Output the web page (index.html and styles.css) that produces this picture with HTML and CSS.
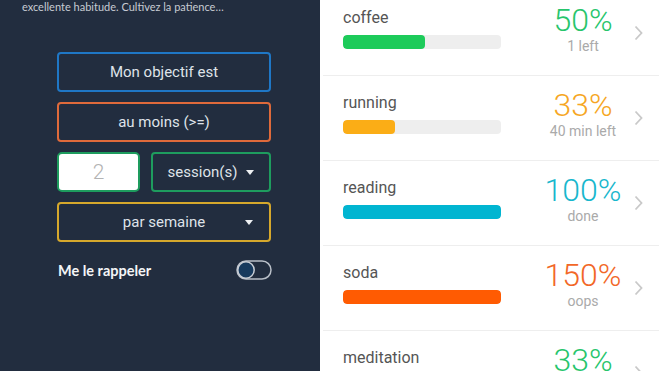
FILE: index.html
```html
<!DOCTYPE html>
<html lang="fr">
<head>
    <meta charset="UTF-8">
    <meta name="viewport" content="width=device-width, initial-scale=1.0">
    <title>Habitudes</title>
    <link rel="stylesheet" href="styles.css">
</head>
<body>
    <div class="screen">
        <div class="setup-panel">
            <p class="intro">excellente habitude. Cultivez la patience…</p>

            <div class="goal-form">
                <div class="goal-box box-blue">Mon objectif est</div>
                <div class="goal-box box-orange">au moins (&gt;=)</div>
                <div class="goal-row">
                    <div class="count-input">2</div>
                    <div class="goal-box box-green unit-select">
                        <span>session(s)</span>
                        <span class="caret"></span>
                    </div>
                </div>
                <div class="goal-box box-yellow period-select">
                    <span class="period-label">par semaine</span>
                    <span class="caret"></span>
                </div>

                <div class="reminder-row">
                    <span class="reminder-label">Me le rappeler</span>
                    <svg class="toggle" width="36" height="20" viewBox="0 0 36 20">
                        <rect x="1" y="1" width="34" height="18" rx="9" fill="none" stroke="#b9bfc8" stroke-width="1.5"/>
                        <circle cx="10" cy="10" r="8.2" fill="#173a5e" stroke="#c9ced6" stroke-width="1.5"/>
                    </svg>
                </div>
            </div>
        </div>

        <div class="habit-list">
            <div class="habit-row">
                <div class="habit-main">
                    <div class="habit-name">coffee</div>
                    <div class="bar"><div class="bar-fill fill-green" style="width: 52%"></div></div>
                </div>
                <div class="habit-stats">
                    <div class="percent text-green">50%</div>
                    <div class="status">1 left</div>
                </div>
                <svg class="chevron" width="9" height="16" viewBox="0 0 9 16"><path d="M1.5 1.5 L7.5 8 L1.5 14.5" fill="none" stroke="#c9c9c9" stroke-width="1.8"/></svg>
            </div>
            <div class="habit-row">
                <div class="habit-main">
                    <div class="habit-name">running</div>
                    <div class="bar"><div class="bar-fill fill-orange" style="width: 33%"></div></div>
                </div>
                <div class="habit-stats">
                    <div class="percent text-orange">33%</div>
                    <div class="status">40 min left</div>
                </div>
                <svg class="chevron" width="9" height="16" viewBox="0 0 9 16"><path d="M1.5 1.5 L7.5 8 L1.5 14.5" fill="none" stroke="#c9c9c9" stroke-width="1.8"/></svg>
            </div>
            <div class="habit-row">
                <div class="habit-main">
                    <div class="habit-name">reading</div>
                    <div class="bar"><div class="bar-fill fill-teal" style="width: 100%"></div></div>
                </div>
                <div class="habit-stats">
                    <div class="percent text-teal">100%</div>
                    <div class="status">done</div>
                </div>
                <svg class="chevron" width="9" height="16" viewBox="0 0 9 16"><path d="M1.5 1.5 L7.5 8 L1.5 14.5" fill="none" stroke="#c9c9c9" stroke-width="1.8"/></svg>
            </div>
            <div class="habit-row">
                <div class="habit-main">
                    <div class="habit-name">soda</div>
                    <div class="bar"><div class="bar-fill fill-red" style="width: 100%"></div></div>
                </div>
                <div class="habit-stats">
                    <div class="percent text-red">150%</div>
                    <div class="status">oops</div>
                </div>
                <svg class="chevron" width="9" height="16" viewBox="0 0 9 16"><path d="M1.5 1.5 L7.5 8 L1.5 14.5" fill="none" stroke="#c9c9c9" stroke-width="1.8"/></svg>
            </div>
            <div class="habit-row">
                <div class="habit-main">
                    <div class="habit-name">meditation</div>
                    <div class="bar"><div class="bar-fill fill-green" style="width: 33%"></div></div>
                </div>
                <div class="habit-stats">
                    <div class="percent text-green">33%</div>
                </div>
                <svg class="chevron" width="9" height="16" viewBox="0 0 9 16"><path d="M1.5 1.5 L7.5 8 L1.5 14.5" fill="none" stroke="#c9c9c9" stroke-width="1.8"/></svg>
            </div>
        </div>
    </div>
</body>
</html>
```

FILE: styles.css
```css
html, body {
    margin: 0;
    padding: 0;
    height: 100%;
    overflow: hidden;
    background-color: #ffffff;
}
.screen {
    display: flex;
    height: 371px;
    overflow: hidden;
    font-family: Roboto, "Liberation Sans", sans-serif;
}

/* left: goal setup */
.setup-panel {
    width: 320px;
    flex-shrink: 0;
    background-color: #222d3f;
    padding-left: 22px;
    box-sizing: border-box;
}
.intro {
    margin: 0;
    font-family: Lato, "Open Sans", sans-serif;
    font-size: 11px;
    line-height: 14px;
    color: #c7cbd2;
}
.goal-form {
    width: 214px;
    margin: 38px 0 0 35px;
    display: flex;
    flex-direction: column;
    gap: 10px;
}
.goal-box {
    height: 40px;
    box-sizing: border-box;
    border: 2px solid;
    border-radius: 4px;
    display: flex;
    align-items: center;
    justify-content: center;
    font-size: 15px;
    color: #dfe3e9;
}
.box-blue { border-color: #1f77c6; }
.box-orange { border-color: #df6a3b; }
.box-green { border-color: #1e9c5e; }
.box-yellow { border-color: #d6a82c; }
.goal-row {
    display: flex;
    gap: 11px;
}
.count-input {
    width: 83px;
    height: 40px;
    box-sizing: border-box;
    background-color: #ffffff;
    border: 2px solid #1e9c5e;
    border-radius: 5px;
    display: flex;
    align-items: center;
    justify-content: center;
    font-size: 21px;
    font-weight: 300;
    color: #b3b3b3;
}
.unit-select {
    flex: 1;
    gap: 9px;
}
.period-select {
    display: grid;
    grid-template-columns: 1fr auto 1fr;
}
.period-label {
    grid-column: 2;
}
.period-select .caret {
    justify-self: end;
    margin-right: 16px;
}
.caret {
    width: 0;
    height: 0;
    border-left: 4.5px solid transparent;
    border-right: 4.5px solid transparent;
    border-top: 5px solid #eef0f3;
}
.reminder-row {
    margin-top: 8px;
    height: 20px;
    display: flex;
    align-items: center;
    justify-content: space-between;
}
.reminder-label {
    font-family: Lato, "Open Sans", sans-serif;
    font-weight: bold;
    font-size: 14.5px;
    color: #f4f5f7;
    padding-left: 1px;
}
.toggle {
    display: block;
    margin-right: -1px;
}

/* right: habit progress list */
.habit-list {
    flex: 1;
    margin-top: -9px;
    margin-left: 3px;
}
.habit-row {
    height: 84px;
    border-bottom: 1px solid #eeeeee;
    display: flex;
    align-items: center;
    padding-left: 20px;
}
.habit-main {
    width: 158px;
    align-self: flex-start;
    padding-top: 17px;
}
.habit-name {
    font-size: 16px;
    line-height: 20px;
    color: #555555;
}
.bar {
    margin-top: 7px;
    height: 14px;
    border-radius: 4px;
    background-color: #eeeeee;
    overflow: hidden;
}
.bar-fill {
    height: 100%;
    border-radius: 4px;
}
.fill-green { background-color: #1dcb5a; }
.fill-orange { background-color: #fbad16; }
.fill-teal { background-color: #01b5d1; }
.fill-red { background-color: #ff5b02; }
.habit-stats {
    width: 90px;
    margin-left: 37px;
    align-self: flex-start;
    padding-top: 11px;
    text-align: center;
}
.percent {
    font-size: 32px;
    font-weight: 300;
    line-height: 36px;
}
.text-green { color: #27c56c; }
.text-orange { color: #f6a623; }
.text-teal { color: #18b7cd; }
.text-red { color: #f26727; }
.status {
    font-size: 14px;
    line-height: 16px;
    color: #aaaaaa;
}
.chevron {
    display: block;
    margin-left: 6px;
}
```
